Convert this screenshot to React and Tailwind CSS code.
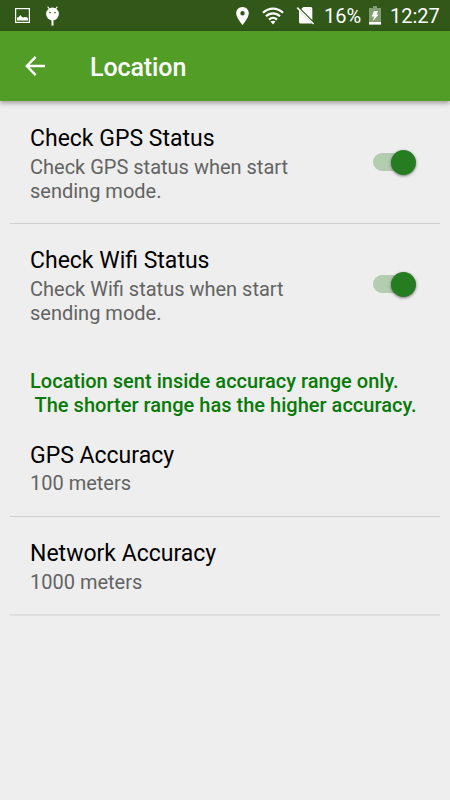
import React from "react";

const StatusBar = () => (
  <div className="flex h-[31px] items-center justify-between bg-[#315819] text-white">
    <div className="flex items-center pl-[15px]">
      <svg width="15" height="15" viewBox="0 0 15 15">
        <rect x="0.6" y="0.6" width="13.8" height="13.8" fill="none" stroke="#fff" strokeWidth="1.2" />
        <path d="M2 12.6V9.6L3.6 9.2L5.4 7L7 9L8.4 9.6L9.6 9L10.6 9.2L11.6 9L13 10.2V12.6Z" fill="#fff" />
      </svg>
      <svg className="ml-4" width="13" height="20" viewBox="0 0 13 20">
        <path d="M1.6 0.6L3.4 3M11.4 0.6L9.6 3" stroke="#fff" strokeWidth="1.1" />
        <ellipse cx="6.5" cy="8" rx="6.4" ry="6.4" fill="#fff" />
        <path d="M6.5 13V19.6" stroke="#fff" strokeWidth="2" />
        <circle cx="4" cy="6.6" r="0.8" fill="#315819" />
        <circle cx="9" cy="6.6" r="0.8" fill="#315819" />
      </svg>
    </div>
    <div className="flex items-center pr-[10px]">
      <svg width="13" height="18" viewBox="0 0 13 18">
        <path
          fillRule="evenodd"
          fill="#fff"
          d="M6.5 0C2.9 0 0.2 2.8 0.2 6.3C0.2 10.9 6.5 18 6.5 18S12.8 10.9 12.8 6.3C12.8 2.8 10.1 0 6.5 0ZM6.5 4.1A2.2 2.2 0 1 1 6.5 8.5A2.2 2.2 0 1 1 6.5 4.1Z"
        />
      </svg>
      <svg className="ml-[13px]" width="22" height="18" viewBox="0 0 22 18" fill="none" stroke="#fff" strokeWidth="2.2">
        <path d="M1 5.8C6.8 0.2 15.2 0.2 21 5.8" />
        <path d="M4 9.3C8 5.4 14 5.4 18 9.3" />
        <path d="M7 12.6C9.3 10.4 12.7 10.4 15 12.6" />
        <path d="M8.5 14.6C10 13.3 12 13.3 13.5 14.6L11 17.6Z" fill="#fff" stroke="none" />
      </svg>
      <svg className="ml-3" width="19" height="19" viewBox="0 0 19 19">
        <path d="M7.4 0.9H14.8Q16.3 0.9 16.3 2.4V14.8L4.8 3.5Z" fill="#fff" />
        <path d="M3 4.5L16 17.5H4.5Q3 17.5 3 16Z" fill="#fff" />
        <path d="M2.2 1.4L18 17.2" stroke="#315819" strokeWidth="2" />
        <path d="M1.2 1.6L17.6 18" stroke="#fff" strokeWidth="1.5" />
      </svg>
      <span className="ml-[9px] w-[37px] text-xl whitespace-nowrap">16%</span>
      <svg className="ml-2" width="12" height="19" viewBox="0 0 12 19">
        <path d="M4 0H8V2H12V16H0V2H4Z" fill="#849d75" />
        <path d="M0 16H12V18.6H0Z" fill="#fff" />
        <path d="M5 5H9L7.6 8.5H9.6L4 15L5 10.6H2.7Z" fill="#fff" />
      </svg>
      <span className="ml-[9px] w-[50px] text-xl whitespace-nowrap">12:27</span>
    </div>
  </div>
);

const Toolbar = () => (
  <div className="flex h-[70px] items-center bg-[#519d26] text-white shadow-[0_2px_5px_rgba(0,0,0,0.35)]">
    <svg className="ml-[25px]" width="20" height="20" viewBox="0 0 20 20" fill="none" stroke="#fff" strokeWidth="2.4">
      <path d="M10.7 0.9L1.8 10L10.7 19.1M1.8 10H20" />
    </svg>
    <h1 className="ml-[45px] pt-[3px] text-[25px] font-medium tracking-[-0.1px]">Location</h1>
  </div>
);

const Switch = () => (
  <div className="flex h-[25px] w-[43px] items-center">
    <div className="h-[18px] w-[37px] shrink-0 rounded-full bg-[#b2cdb0]" />
    <div className="-ml-[19px] size-[25px] shrink-0 rounded-full bg-[#267c20] shadow-[0_1px_3px_rgba(0,0,0,0.5)]" />
  </div>
);

const Preference = ({ title, summary, toggle, spacing = "gap-0.5 pb-5" }) => (
  <div className="flex items-center pt-[23px] pr-6 pl-5">
    <div className={`flex w-[280px] flex-col ${spacing}`}>
      <div className="text-[23px] leading-7 text-black">{title}</div>
      <div className="text-xl leading-6 text-[#636363]">{summary}</div>
    </div>
    {toggle && (
      <div className="ml-auto pb-6">
        <Switch />
      </div>
    )}
  </div>
);

export default function App() {
  return (
    <div className="h-[800px] w-[450px] overflow-hidden bg-[#eeeeee] font-['Roboto',sans-serif]">
      <StatusBar />
      <Toolbar />
      <div className="px-[10px] pt-px">
        <Preference title="Check GPS Status" summary="Check GPS status when start sending mode." toggle />
        <div className="h-px bg-[#d0d0d0]" />
        <Preference title="Check Wifi Status" summary="Check Wifi status when start sending mode." toggle />
        <div className="pt-6 pb-0.5 pl-5 text-xl leading-6 font-medium tracking-[0.02px] whitespace-pre text-[#087a08]">
          {"Location sent inside accuracy range only.\n The shorter range has the higher accuracy."}
        </div>
        <Preference title="GPS Accuracy" summary="100 meters" spacing="gap-px pb-[21px]" />
        <div className="h-px bg-[#d0d0d0]" />
        <Preference title="Network Accuracy" summary="1000 meters" />
        <div className="h-0.5 bg-[#dfdfdf]" />
      </div>
    </div>
  );
}
